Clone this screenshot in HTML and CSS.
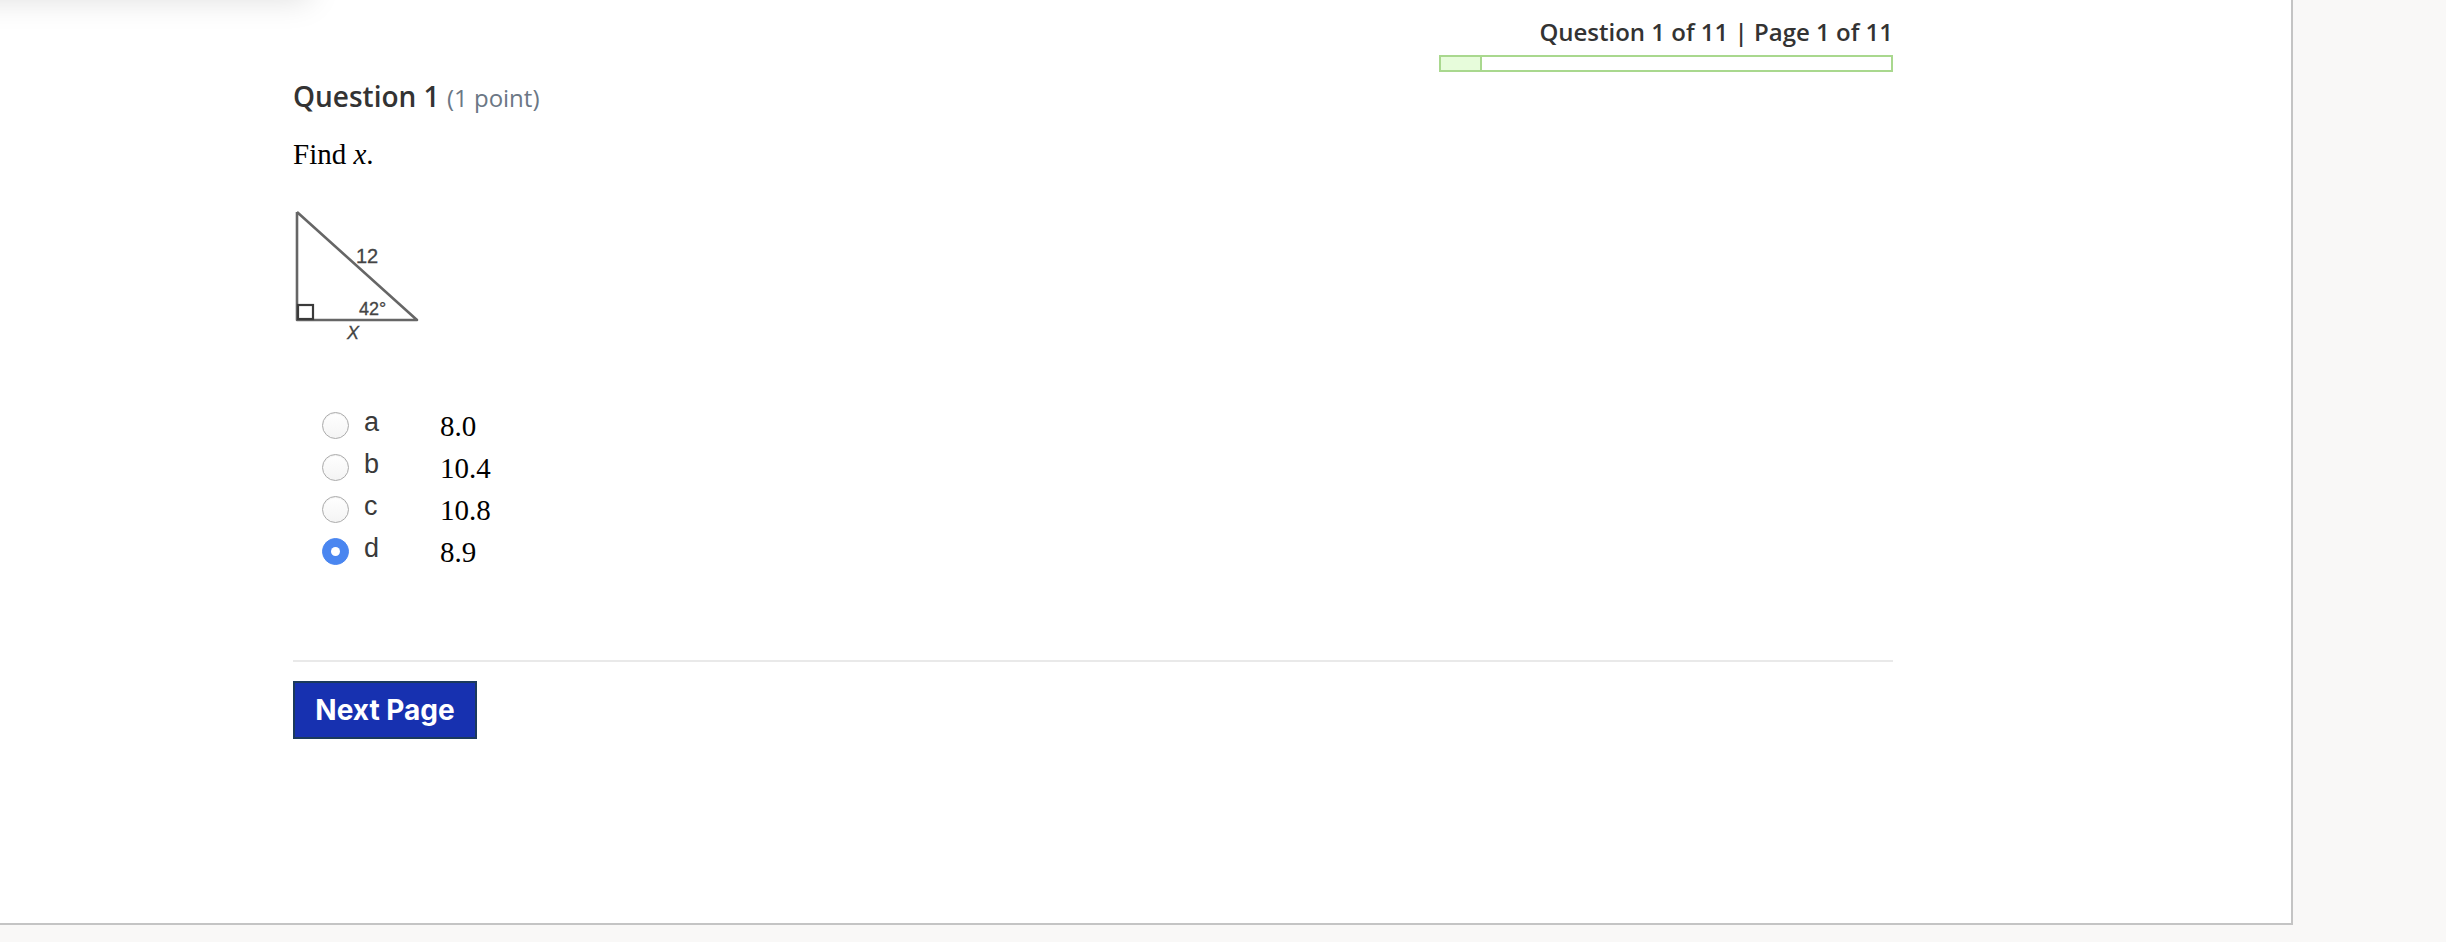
FILE: index.html
```html
<!DOCTYPE html>
<html>
	<head>
		<meta charset="utf-8">
		<title>Quiz</title>
		<link rel="stylesheet" href="styles.css">
	</head>
	<body>
		<div class="menu-shadow"></div>
		<div id="quiz-panel">
			<div class="quiz-content">
				<!-- progress -->
				<div class="quiz-status">
					<div class="status-text">Question 1 of 11 | Page 1 of 11</div>
					<div class="progress-bar">
						<div class="progress-fill" style="width: 9.09%"></div>
					</div>
				</div>

				<!-- question -->
				<h2 class="question-title">Question 1 <span class="points">(1 point)</span></h2>
				<p class="question-text">Find <i>x</i>.</p>

				<svg class="figure" width="135" height="145" viewBox="0 0 135 145">
					<polyline points="7,10 7,118 127,118 7,10" fill="none" stroke="#666" stroke-width="2.6" stroke-linejoin="round"/>
					<rect x="8" y="103" width="15" height="14" fill="none" stroke="#3a3a3a" stroke-width="2.2"/>
					<text x="66" y="61" font-family="Liberation Sans Narrow, Liberation Sans, sans-serif" font-size="20" fill="#444" stroke="#444" stroke-width="0.3">12</text>
					<text x="69" y="113" font-family="Liberation Sans Narrow, Liberation Sans, sans-serif" font-size="18" fill="#444" stroke="#444" stroke-width="0.3">42°</text>
					<text x="57" y="137" font-family="Liberation Sans, sans-serif" font-size="18" font-style="italic" fill="#444" stroke="#444" stroke-width="0.3">X</text>
				</svg>

				<ul class="choices">
					<li class="choice"><span class="radio"></span><span class="choice-letter">a</span><span class="choice-value">8.0</span></li>
					<li class="choice"><span class="radio"></span><span class="choice-letter">b</span><span class="choice-value">10.4</span></li>
					<li class="choice"><span class="radio"></span><span class="choice-letter">c</span><span class="choice-value">10.8</span></li>
					<li class="choice"><span class="radio checked"></span><span class="choice-letter">d</span><span class="choice-value">8.9</span></li>
				</ul>

				<div class="quiz-footer">
					<button class="next-btn">Next Page</button>
				</div>
			</div>
		</div>
	</body>
</html>
```

FILE: styles.css
```css
/* base */
* {
	margin: 0;
	padding: 0;
	box-sizing: border-box;
}

body {
	background-color: #f9f8f7;
	font-family: "Open Sans", sans-serif;
	color: #333;
	height: 100vh;
	overflow: hidden;
	position: relative;
}

/* shadow of the menu above the page */
.menu-shadow {
	position: absolute;
	top: -60px;
	left: -40px;
	width: 350px;
	height: 60px;
	background-color: #fff;
	box-shadow: 0 0 32px rgba(0,0,0,0.13);
	z-index: 5;
}

/* panel */
#quiz-panel {
	width: 2293px;
	height: 925px;
	background-color: #fff;
	border-right: 2px solid #c4c4c4;
	border-bottom: 2px solid #c4c4c4;
}

.quiz-content {
	width: 1600px;
	margin-left: 293px;
	padding-top: 15px;
}

/* progress */
.quiz-status {
	display: flex;
	flex-direction: column;
	align-items: flex-end;
}

.status-text {
	font-size: 24px;
	font-weight: 600;
	line-height: 33px;
	color: #333;
}

.progress-bar {
	width: 454px;
	height: 17px;
	margin-top: 7px;
	border: 2px solid #a9d88e;
	display: flex;
}

.progress-fill {
	background-color: #e7fcdb;
	border-right: 2px solid #a9d88e;
}

/* question */
.question-title {
	margin-top: 5px;
	font-size: 28px;
	font-weight: 600;
	line-height: 38px;
	color: #333;
}

.points {
	font-size: 24px;
	font-weight: 400;
	color: #6b7785;
}

.question-text {
	margin-top: 21px;
	font-family: "Liberation Serif", serif;
	font-size: 29px;
	line-height: 32px;
	color: #000;
}

.figure {
	display: block;
	margin-top: 32px;
	margin-left: -3px;
}

/* answers */
.choices {
	list-style: none;
	margin-top: 57px;
}

.choice {
	display: flex;
	align-items: center;
	height: 42px;
}

.radio {
	width: 27px;
	height: 27px;
	margin-left: 29px;
	border-radius: 50%;
	border: 1px solid #ababab;
	background: linear-gradient(#ffffff, #f4f4f4);
	box-shadow: inset 0 1px 1px rgba(0,0,0,0.06);
	display: flex;
	justify-content: center;
	align-items: center;
}

.radio.checked {
	border-color: #4a86f0;
	background: #4a86f0;
	box-shadow: none;
}

.radio.checked::after {
	content: "";
	width: 9px;
	height: 9px;
	border-radius: 50%;
	background-color: #fff;
}

.choice-letter {
	width: 76px;
	margin-left: 15px;
	font-family: "Liberation Sans", sans-serif;
	font-size: 27px;
	color: #3a3a3a;
	margin-top: -6px;
}

.choice-value {
	font-family: "Liberation Serif", serif;
	font-size: 29px;
	color: #000;
	margin-top: 2px;
}

/* footer */
.quiz-footer {
	margin-top: 88px;
	border-top: 2px solid #e9e9e9;
	padding-top: 19px;
}

.next-btn {
	width: 184px;
	height: 58px;
	background-color: #1731b0;
	border: 2px solid #1b3a5c;
	color: #fff;
	font-family: Inter, sans-serif;
	font-size: 28px;
	font-weight: 700;
	cursor: pointer;
}
```
